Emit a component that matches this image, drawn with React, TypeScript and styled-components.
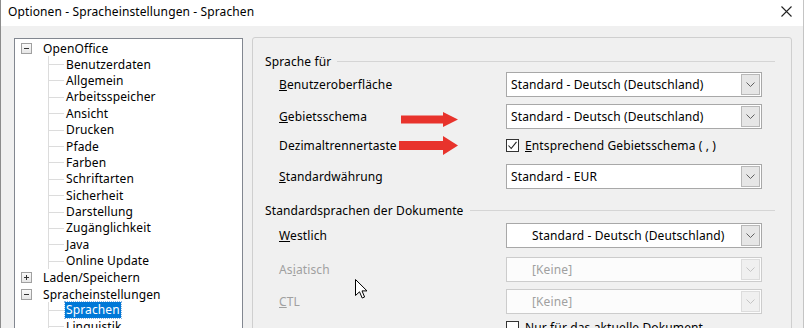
import { FC, ReactNode } from 'react';
import styled, { createGlobalStyle } from 'styled-components';

const GlobalStyle = createGlobalStyle`
  html, body {
    margin: 0;
    padding: 0;
    background: #f0f0f0;
  }
  body {
    font-family: "Noto Sans", "Liberation Sans", sans-serif;
    font-size: 12px;
    letter-spacing: 0.12px;
    color: #000;
  }
`;

const treeItems: { label: string; level: 0 | 1; expander?: 'minus' | 'plus'; selected?: boolean }[] = [
  { label: 'OpenOffice', level: 0, expander: 'minus' },
  { label: 'Benutzerdaten', level: 1 },
  { label: 'Allgemein', level: 1 },
  { label: 'Arbeitsspeicher', level: 1 },
  { label: 'Ansicht', level: 1 },
  { label: 'Drucken', level: 1 },
  { label: 'Pfade', level: 1 },
  { label: 'Farben', level: 1 },
  { label: 'Schriftarten', level: 1 },
  { label: 'Sicherheit', level: 1 },
  { label: 'Darstellung', level: 1 },
  { label: 'Zugänglichkeit', level: 1 },
  { label: 'Java', level: 1 },
  { label: 'Online Update', level: 1 },
  { label: 'Laden/Speichern', level: 0, expander: 'plus' },
  { label: 'Spracheinstellungen', level: 0, expander: 'minus' },
  { label: 'Sprachen', level: 1, selected: true },
  { label: 'Linguistik', level: 1 },
];

const Chevron: FC<{ disabled?: boolean }> = ({ disabled }) => (
  <svg width="9" height="5" viewBox="0 0 9 5">
    <path d="M0.5 0.5 L4.5 4.5 L8.5 0.5" fill="none" stroke={disabled ? '#c4c4c4' : '#606060'} strokeWidth="1" />
  </svg>
);

const Dropdown: FC<{ value: string; indent?: boolean; disabled?: boolean }> = ({ value, indent, disabled }) => (
  <Select $disabled={disabled}>
    <SelectValue $indent={indent} $disabled={disabled}>
      {value}
    </SelectValue>
    <SelectButton $disabled={disabled}>
      <Chevron disabled={disabled} />
    </SelectButton>
  </Select>
);

const CheckField: FC<{ checked?: boolean; children: ReactNode }> = ({ checked, children }) => (
  <CheckLabel>
    <CheckBox>
      {checked && (
        <svg width="11" height="11" viewBox="0 0 11 11">
          <path d="M1.5 5.5 L4.2 8.5 L9.5 1.8" fill="none" stroke="#222" strokeWidth="1.1" />
        </svg>
      )}
    </CheckBox>
    <span>{children}</span>
  </CheckLabel>
);

const Arrow: FC<{ left: number; top: number; width: number; height: number; shaft: number }> = ({
  left,
  top,
  width,
  height,
  shaft,
}) => {
  const head = 15;
  const y1 = (height - shaft) / 2;
  const y2 = y1 + shaft;
  return (
    <Annotation style={{ left, top }}>
      <svg width={width} height={height}>
        <polygon
          points={`0,${y1} ${width - head},${y1} ${width - head},0 ${width},${height / 2} ${width - head},${height} ${width - head},${y2} 0,${y2}`}
          fill="#e8332c"
        />
      </svg>
    </Annotation>
  );
};

const App: FC = () => {
  return (
    <Window>
      <GlobalStyle />
      <TitleBar>
        <span>Optionen - Spracheinstellungen - Sprachen</span>
        <svg width="11" height="11" viewBox="0 0 11 11">
          <path d="M0.5 0.5 L10.5 10.5 M10.5 0.5 L0.5 10.5" stroke="#222" strokeWidth="1.1" />
        </svg>
      </TitleBar>
      <Body>
        <Tree>
          {treeItems.map((item) => (
            <TreeRow key={item.label}>
              {item.level === 0 ? (
                <>
                  <Expander>
                    <svg width="9" height="9" viewBox="0 0 9 9">
                      <path d="M2 4.5 H7" stroke="#333" strokeWidth="1" />
                      {item.expander === 'plus' && <path d="M4.5 2 V7" stroke="#333" strokeWidth="1" />}
                    </svg>
                  </Expander>
                  <RootLabel>{item.label}</RootLabel>
                </>
              ) : (
                <>
                  <Connector />
                  <ChildLabel $selected={item.selected}>{item.label}</ChildLabel>
                </>
              )}
            </TreeRow>
          ))}
        </Tree>
        <Page>
          <Heading>Sprache für</Heading>
          <FieldRow $top={2}>
            <Label>
              <u>B</u>enutzeroberfläche
            </Label>
            <Dropdown value="Standard - Deutsch (Deutschland)" />
          </FieldRow>
          <FieldRow $top={7}>
            <Label>
              <u>G</u>ebietsschema
            </Label>
            <Dropdown value="Standard - Deutsch (Deutschland)" />
          </FieldRow>
          <FieldRow $top={7} $height={18}>
            <Label>Dezimaltrennertaste</Label>
            <CheckField checked>
              <u>E</u>ntsprechend Gebietsschema ( , )
            </CheckField>
          </FieldRow>
          <FieldRow $top={10}>
            <Label>
              <u>S</u>tandardwährung
            </Label>
            <Dropdown value="Standard - EUR" />
          </FieldRow>
          <Heading $top={12}>Standardsprachen der Dokumente</Heading>
          <FieldRow $top={4}>
            <Label>
              <u>W</u>estlich
            </Label>
            <Dropdown value="Standard - Deutsch (Deutschland)" indent />
          </FieldRow>
          <FieldRow $top={9}>
            <Label $disabled>
              As<u>i</u>atisch
            </Label>
            <Dropdown value="[Keine]" indent disabled />
          </FieldRow>
          <FieldRow $top={7}>
            <Label $disabled>
              <u>C</u>TL
            </Label>
            <Dropdown value="[Keine]" indent disabled />
          </FieldRow>
          <FieldRow $top={4} $height={18}>
            <span />
            <CheckField>
              <u>N</u>ur für das aktuelle Dokument
            </CheckField>
          </FieldRow>
        </Page>
      </Body>
      <Arrow left={400} top={112} width={57} height={15} shaft={8} />
      <Arrow left={398} top={136} width={59} height={19} shaft={9} />
      <Annotation style={{ left: 354, top: 279 }}>
        <svg width="14" height="21" viewBox="0 0 14 21">
          <path
            d="M0.5 0.5 L0.5 16.5 L4.5 12.8 L7.2 19 L9.6 18 L7 11.9 L12 11.9 Z"
            fill="#fff"
            stroke="#000"
            strokeWidth="1"
            strokeLinejoin="miter"
          />
        </svg>
      </Annotation>
    </Window>
  );
};

export default App;

const Window = styled.div`
  position: relative;
  width: 804px;
  height: 328px;
  box-sizing: border-box;
  overflow: hidden;
  border-left: 1px solid #8c8c8c;
  border-right: 1px solid #c4c4c4;
  background: #f0f0f0;
`;

const TitleBar = styled.div`
  display: flex;
  align-items: center;
  justify-content: space-between;
  height: 26px;
  padding: 0 11px 3px 7px;
  box-sizing: border-box;
  background: #fff;
  color: #000;
`;

const Body = styled.div`
  display: flex;
  align-items: flex-start;
  padding: 11px 0 0 13px;
`;

const Tree = styled.div`
  width: 229px;
  height: 310px;
  margin-top: 1px;
  box-sizing: border-box;
  padding-top: 1px;
  background: #fff;
  border: 1px solid #828790;
`;

const TreeRow = styled.div`
  display: flex;
  align-items: center;
  height: 16.4px;
  white-space: nowrap;
`;

const Expander = styled.span`
  display: flex;
  width: 9px;
  height: 9px;
  margin-left: 6px;
  border: 1px solid #a0a0a0;
  box-sizing: content-box;
  background: linear-gradient(#fafafa, #e6e6e6);
`;

const RootLabel = styled.span`
  margin-left: 11px;
`;

const Connector = styled.span`
  align-self: stretch;
  width: 15px;
  margin-left: 33px;
  border-left: 1px solid #dcdcdc;
  background: linear-gradient(#dcdcdc, #dcdcdc) no-repeat 0 50% / 100% 1px;
`;

const ChildLabel = styled.span<{ $selected?: boolean }>`
  margin-left: 1px;
  padding: 0 1px;
  line-height: 16px;
  background: ${(p) => (p.$selected ? '#0078d7' : 'transparent')};
  color: ${(p) => (p.$selected ? '#fff' : '#000')};
  outline: ${(p) => (p.$selected ? '1px dotted #8ab4e0' : 'none')};
`;

const Page = styled.div`
  width: 540px;
  height: 320px;
  margin-left: 9px;
  box-sizing: border-box;
  padding: 14px 16px 0 12px;
  border: 1px solid #cfcfcf;
  border-radius: 3px;
  background: #f0f0f0;
`;

const Heading = styled.div<{ $top?: number }>`
  display: flex;
  align-items: center;
  gap: 6px;
  height: 18px;
  margin-top: ${(p) => p.$top ?? 0}px;
  white-space: nowrap;

  &::after {
    content: '';
    flex: 1;
    border-top: 1px solid #d5d5d5;
  }
`;

const FieldRow = styled.div<{ $top?: number; $height?: number }>`
  display: grid;
  grid-template-columns: 241px 256px;
  align-items: center;
  height: ${(p) => p.$height ?? 25}px;
  margin-top: ${(p) => p.$top ?? 0}px;
`;

const Label = styled.span<{ $disabled?: boolean }>`
  padding-left: 14px;
  color: ${(p) => (p.$disabled ? '#a0a0a0' : '#000')};
  white-space: nowrap;
`;

const Select = styled.div<{ $disabled?: boolean }>`
  display: flex;
  align-items: stretch;
  height: 25px;
  box-sizing: border-box;
  border: 1px solid ${(p) => (p.$disabled ? '#cccccc' : '#a8a8a8')};
  background: ${(p) => (p.$disabled ? '#fcfcfc' : '#fff')};
`;

const SelectValue = styled.span<{ $indent?: boolean; $disabled?: boolean }>`
  flex: 1;
  display: flex;
  align-items: center;
  padding-left: ${(p) => (p.$indent ? 25 : 4)}px;
  color: ${(p) => (p.$disabled ? '#a0a0a0' : '#000')};
  white-space: nowrap;
`;

const SelectButton = styled.span<{ $disabled?: boolean }>`
  display: flex;
  align-items: center;
  justify-content: center;
  width: 17px;
  margin: 1px;
  border: 1px solid ${(p) => (p.$disabled ? '#dcdcdc' : '#b8b8b8')};
  background: ${(p) => (p.$disabled ? '#f0f0f0' : '#e6e6e6')};
`;

const CheckLabel = styled.label`
  display: flex;
  align-items: center;
  gap: 6px;
  white-space: nowrap;
`;

const CheckBox = styled.span`
  display: flex;
  align-items: center;
  justify-content: center;
  width: 13px;
  height: 13px;
  box-sizing: border-box;
  border: 1px solid #333;
  background: #fff;
`;

const Annotation = styled.div`
  position: absolute;
  display: flex;
  pointer-events: none;
`;
